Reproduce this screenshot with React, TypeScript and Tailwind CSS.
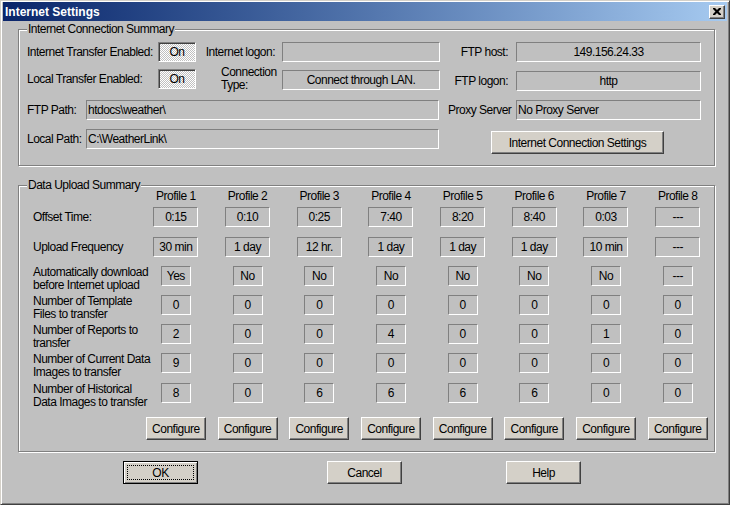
import React from 'react';
import clsx from 'clsx';

const Field = ({ className, children, left }: { className?: string; children?: React.ReactNode; left?: boolean }) => (
  <div
    className={clsx(
      'flex items-center border border-[#808080] border-b-white border-r-white leading-none whitespace-nowrap',
      left ? 'justify-start pl-px' : 'justify-center',
      className
    )}
  >
    {children}
  </div>
);

const Toggle = ({ children }: { children: React.ReactNode }) => (
  <div className="flex items-center justify-center w-[38px] h-[20px] border border-[#808080] border-b-white border-r-white shadow-[inset_1px_1px_#404040] bg-[image:repeating-conic-gradient(#ffffff_0%_25%,#c0c0c0_0%_50%)] bg-[length:2px_2px] leading-none">
    {children}
  </div>
);

const Btn = ({ className, children }: { className?: string; children: React.ReactNode }) => (
  <button
    className={clsx(
      'flex items-center justify-center bg-[#d4d0c8] border border-t-white border-l-white border-b-[#404040] border-r-[#404040] shadow-[inset_-1px_-1px_#808080] leading-none whitespace-nowrap',
      className
    )}
  >
    {children}
  </button>
);

const Group = ({ title, className, children }: { title: string; className?: string; children: React.ReactNode }) => (
  <div className={clsx('relative ml-[15px] w-[697px] border border-[#808080] shadow-[inset_1px_1px_#ffffff,1px_1px_#ffffff]', className)}>
    <span className="absolute left-[8px] -top-[7px] bg-[#c0c0c0] px-px leading-[13px] whitespace-nowrap">{title}</span>
    {children}
  </div>
);

const profiles = ['Profile 1', 'Profile 2', 'Profile 3', 'Profile 4', 'Profile 5', 'Profile 6', 'Profile 7', 'Profile 8'];

type Row = { label: string[]; values: string[]; wide: boolean; h: string };

const rows: Row[] = [
  { label: ['Offset Time:'], values: ['0:15', '0:10', '0:25', '7:40', '8:20', '8:40', '0:03', '---'], wide: true, h: 'h-[30px]' },
  { label: ['Upload Frequency'], values: ['30 min', '1 day', '12 hr.', '1 day', '1 day', '1 day', '10 min', '---'], wide: true, h: 'h-[29px]' },
  { label: ['Automatically download', 'before Internet upload'], values: ['Yes', 'No', 'No', 'No', 'No', 'No', 'No', '---'], wide: false, h: 'h-[29px]' },
  { label: ['Number of Template', 'Files to transfer'], values: ['0', '0', '0', '0', '0', '0', '0', '0'], wide: false, h: 'h-[29px]' },
  { label: ['Number of Reports to', 'transfer'], values: ['2', '0', '0', '4', '0', '0', '1', '0'], wide: false, h: 'h-[29px]' },
  { label: ['Number of Current Data', 'Images to transfer'], values: ['9', '0', '0', '0', '0', '0', '0', '0'], wide: false, h: 'h-[30px]' },
  { label: ['Number of Historical', 'Data Images to transfer'], values: ['8', '0', '6', '6', '6', '6', '0', '0'], wide: false, h: 'h-[34px]' },
];

export default function App() {
  return (
    <div className="w-[730px] h-[505px] bg-[#c0c0c0] border border-t-[#d4d0c8] border-l-[#d4d0c8] border-b-[#404040] border-r-[#404040] shadow-[inset_1px_1px_#ffffff,inset_-1px_-1px_#808080] px-[2px] pt-[1px] flex flex-col text-[12px] tracking-[-0.5px] text-black font-['Liberation_Sans',Arial,sans-serif]">
      {/* title bar */}
      <div className="h-[19px] flex items-center justify-between bg-gradient-to-r from-[#0a246a] to-[#a6caf0] pl-[2px] pr-[2px]">
        <span className="text-white font-bold text-[12px] tracking-normal">Internet Settings</span>
        <div className="w-[16px] h-[14px] flex items-center justify-center bg-[#d4d0c8] border border-t-white border-l-white border-b-[#404040] border-r-[#404040] shadow-[inset_-1px_-1px_#808080]">
          <svg width="8" height="7" viewBox="0 0 8 7">
            <path d="M0 0h2l2 2 2-2h2v1L5.5 3.5 8 6v1H6L4 5 2 7H0V6l2.5-2.5L0 1z" fill="#000" />
          </svg>
        </div>
      </div>

      {/* Internet Connection Summary */}
      <Group title="Internet Connection Summary" className="mt-[8px] h-[137px]">
        <div className="flex pt-[12px] pl-[8px] whitespace-nowrap">
          <div className="w-[421px] flex flex-col">
            <div className="flex h-[20px] items-center">
              <span className="w-[131px]">Internet Transfer Enabled:</span>
              <Toggle>On</Toggle>
              <span className="w-[86px] text-right pr-[7px]">Internet logon:</span>
              <Field className="w-[158px] h-[20px]" />
            </div>
            <div className="flex h-[20px] items-center mt-[7px]">
              <span className="w-[131px]">Local Transfer Enabled:</span>
              <Toggle>On</Toggle>
              <span className="w-[86px] pl-[25px] leading-[13px]">
                Connection
                <br />
                Type:
              </span>
              <Field className="w-[158px] h-[20px] mt-[2px]">Connect through LAN.</Field>
            </div>
            <div className="flex h-[20px] items-center mt-[11px]">
              <span className="w-[59px]">FTP Path:</span>
              <Field left className="w-[353px] h-[20px]">htdocs\weather\</Field>
            </div>
            <div className="flex h-[20px] items-center mt-[9px]">
              <span className="w-[59px]">Local Path:</span>
              <Field left className="w-[353px] h-[20px]">C:\WeatherLink\</Field>
            </div>
          </div>
          <div className="flex flex-col">
            <div className="flex h-[20px] items-center">
              <span className="w-[68px] text-right pr-[8px]">FTP host:</span>
              <Field className="w-[185px] h-[20px]">149.156.24.33</Field>
            </div>
            <div className="flex h-[20px] items-center mt-[9px]">
              <span className="w-[68px] text-right pr-[8px]">FTP logon:</span>
              <Field className="w-[185px] h-[20px]">http</Field>
            </div>
            <div className="flex h-[20px] items-center mt-[9px]">
              <span className="w-[68px]">Proxy Server</span>
              <Field left className="w-[185px] h-[20px]">No Proxy Server</Field>
            </div>
            <Btn className="ml-[43px] mt-[11px] w-[173px] h-[23px]">Internet Connection Settings</Btn>
          </div>
        </div>
      </Group>

      {/* Data Upload Summary */}
      <Group title="Data Upload Summary" className="mt-[19px] h-[267px]">
        <div className="grid grid-cols-[121px_repeat(8,71.7px)] pt-[4px] leading-[13px]">
          <div />
          {profiles.map((p) => (
            <div key={p} className="text-center">{p}</div>
          ))}
        </div>
        <div className="mt-[4px]">
          {rows.map((r) => (
            <div key={r.label[0]} className={clsx('grid grid-cols-[121px_repeat(8,71.7px)] items-start', r.h)}>
              <div className={clsx('pl-[14px] whitespace-nowrap', r.label.length > 1 ? 'leading-[13px]' : 'leading-[20px]')}>
                {r.label.map((l) => (
                  <div key={l}>{l}</div>
                ))}
              </div>
              {r.values.map((v, i) => (
                <div key={i} className="flex justify-center">
                  <Field className={clsx('h-[20px]', r.wide ? 'w-[45px]' : 'w-[30px]')}>{v}</Field>
                </div>
              ))}
            </div>
          ))}
          <div className="grid grid-cols-[121px_repeat(8,71.7px)]">
            <div />
            {profiles.map((p) => (
              <div key={p} className="flex justify-center">
                <Btn className="w-[60px] h-[23px]">Configure</Btn>
              </div>
            ))}
          </div>
        </div>
      </Group>

      {/* bottom buttons */}
      <div className="flex mt-[9px] ml-[120px]">
        <button className="w-[75px] h-[23px] border border-black bg-[#d4d0c8] shadow-[inset_1px_1px_#ffffff,inset_-1px_-1px_#808080] p-[3px] flex">
          <span className="flex-1 flex items-center justify-center border border-dotted border-black leading-none">OK</span>
        </button>
        <Btn className="ml-[129px] w-[75px] h-[23px]">Cancel</Btn>
        <Btn className="ml-[104px] w-[75px] h-[23px]">Help</Btn>
      </div>
    </div>
  );
}
